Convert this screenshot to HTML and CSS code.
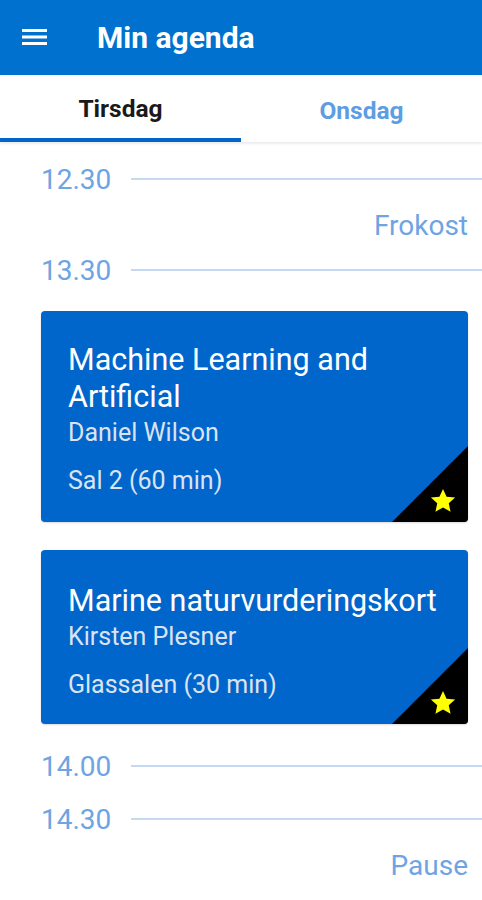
FILE: index.html
```html
<!DOCTYPE html>
<html lang="da">
<head>
<meta charset="utf-8">
<title>Min agenda</title>
<link rel="stylesheet" href="styles.css">
</head>
<body>
<header class="appbar">
  <svg class="menu" width="25" height="16" viewBox="0 0 25 16"><rect x="0" y="0" width="25" height="3" fill="#fff"/><rect x="0" y="6.5" width="25" height="3" fill="#fff"/><rect x="0" y="13" width="25" height="3" fill="#fff"/></svg>
  <h1 class="title">Min agenda</h1>
</header>
<nav class="tabs">
  <div class="tab active">Tirsdag</div>
  <div class="tab">Onsdag</div>
</nav>
<main class="timeline">
  <div class="slot"><span class="time">12.30</span><span class="rule"></span></div>
  <div class="note note-lunch">Frokost</div>
  <div class="slot slot-b"><span class="time">13.30</span><span class="rule"></span></div>
  <article class="card card-1">
    <h2 class="card-title">Machine Learning and<br>Artificial</h2>
    <div class="card-speaker">Daniel Wilson</div>
    <div class="card-room">Sal 2 (60 min)</div>
    <div class="fav"><svg class="star" width="26" height="25" viewBox="0 0 24 23"><path d="M12 0.8l3.3 7.2 7.9.8-5.9 5.3 1.7 7.8L12 17.9 5 21.9l1.7-7.8L0.8 8.8l7.9-.8z" fill="#ffff00"/></svg></div>
  </article>
  <article class="card card-2">
    <h2 class="card-title">Marine naturvurderingskort</h2>
    <div class="card-speaker">Kirsten Plesner</div>
    <div class="card-room">Glassalen (30 min)</div>
    <div class="fav"><svg class="star" width="26" height="25" viewBox="0 0 24 23"><path d="M12 0.8l3.3 7.2 7.9.8-5.9 5.3 1.7 7.8L12 17.9 5 21.9l1.7-7.8L0.8 8.8l7.9-.8z" fill="#ffff00"/></svg></div>
  </article>
  <div class="slot slot-c"><span class="time">14.00</span><span class="rule"></span></div>
  <div class="slot slot-d"><span class="time">14.30</span><span class="rule"></span></div>
  <div class="note note-pause">Pause</div>
</main>
</body>
</html>
```
FILE: styles.css
```css
* { box-sizing: border-box; }
html, body { margin: 0; padding: 0; }
body {
  width: 482px;
  height: 900px;
  overflow: hidden;
  background: #ffffff;
  font-family: Roboto, "Noto Sans", sans-serif;
}
.appbar {
  height: 75px;
  background: #0071ce;
  display: flex;
  align-items: center;
  padding-left: 22px;
}
.menu { display: block; margin-top: -2px; }
.title {
  margin: 0 0 0 50px;
  color: #ffffff;
  font-size: 30px;
  font-weight: 700;
  letter-spacing: 0;
}
.tabs {
  display: flex;
  height: 67px;
  box-shadow: 0 2px 2px rgba(0,0,0,0.08);
  position: relative;
}
.tab {
  flex: 1;
  display: flex;
  align-items: center;
  justify-content: center;
  font-size: 24.5px;
  font-weight: 700;
  color: #5d9de2;
  padding-top: 4px;
}
.tab.active {
  color: #1a1a1a;
  border-bottom: 4px solid #0066cc;
}
.timeline {
  padding: 20px 14px 0 41px;
  display: flex;
  flex-direction: column;
}
.slot {
  height: 36px;
  display: flex;
  align-items: center;
}
.time {
  width: 90px;
  font-size: 28px;
  color: #6ea4e3;
  line-height: 36px;
}
.rule {
  flex: 1;
  height: 2px;
  background: #c5d9f2;
  margin-right: -14px;
  margin-top: -2px;
}
.note {
  height: 36px;
  line-height: 36px;
  text-align: right;
  font-size: 28px;
  color: #6ea4e3;
}
.note-lunch { margin-top: 10px; }
.slot-b { margin-top: 9px; }
.card {
  position: relative;
  background: #0066cc;
  border-radius: 4px;
  overflow: hidden;
  color: #ffffff;
  padding: 30px 20px 23px 27px;
  box-shadow: 0 1px 2px rgba(0,0,0,0.15);
}
.card-1 { margin-top: 22px; height: 211px; }
.card-2 { margin-top: 28px; height: 174px; padding-top: 32px; }
.card-title {
  margin: 0;
  font-size: 30.5px;
  font-weight: 400;
  line-height: 37px;
  white-space: nowrap;
}
.card-speaker {
  font-size: 25px;
  line-height: 36px;
  color: #dce3f0;
}
.card-room {
  margin-top: 12px;
  font-size: 25px;
  line-height: 36px;
  color: #dce3f0;
}
.fav {
  position: absolute;
  right: 0;
  bottom: 0;
  width: 76px;
  height: 76px;
  background: #000000;
  clip-path: polygon(100% 0, 100% 100%, 0 100%);
}
.star {
  position: absolute;
  right: 12px;
  bottom: 9px;
}
.slot-c { margin-top: 25px; }
.slot-d { margin-top: 17px; }
.note-pause { margin-top: 10px; }
```
